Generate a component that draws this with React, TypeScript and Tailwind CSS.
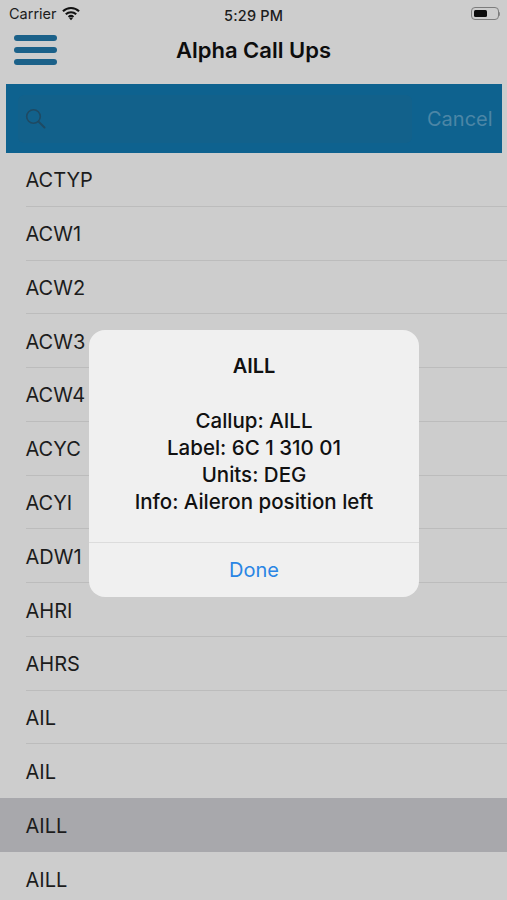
const rows = ["ACTYP","ACW1","ACW2","ACW3","ACW4","ACYC","ACYI","ADW1","AHRI","AHRS","AIL","AIL","AILL","AILL"];

export default function App() {
  return (
    <div className="relative w-[507px] h-[900px] overflow-hidden bg-[#cdcdcd] text-[#111] font-['Inter','Liberation_Sans',sans-serif]">
      {/* status bar */}
      <div className="h-[27px] flex items-center pl-[9px] pr-[7px] relative text-[14.5px] text-[#1c1c1c]">
        <span>Carrier</span>
        <svg className="ml-[5px] mb-[1px]" width="18" height="15" viewBox="0 0 19 15" fill="none" stroke="#111" strokeWidth="2.2">
          <path d="M1 5.2C5.8 .6 13.2 .6 18 5.2" />
          <path d="M4 8.4C7.1 5.5 11.9 5.5 15 8.4" />
          <path d="M6.9 11.2C8.4 9.9 10.6 9.9 12.1 11.2" />
          <path d="M9.5 14.6L7.6 12.5C8.7 11.6 10.3 11.6 11.4 12.5Z" fill="#111" stroke="none" />
        </svg>
        <span className="absolute left-[224px] top-[5px] font-medium tracking-[0.2px]">5:29 PM</span>
        <div className="ml-auto flex items-center">
          <div className="w-[28px] h-[13px] rounded-[4px] border border-[#7d7d7d] p-[2px]">
            <div className="w-[13px] h-full rounded-[1.5px] bg-[#0c0c0c]" />
          </div>
          <div className="w-[1.5px] h-[4px] bg-[#8a8a8a] rounded-r-sm" />
        </div>
      </div>
      {/* nav */}
      <div className="h-[57px] relative flex items-center justify-center">
        <div className="absolute left-[13.5px] top-[7.5px] w-[43px] flex flex-col gap-[6.3px]">
          <div className="h-[6px] rounded-full bg-[#1b6189]" />
          <div className="h-[6px] rounded-full bg-[#1b6189]" />
          <div className="h-[6px] rounded-full bg-[#1b6189]" />
        </div>
        <h1 className="text-[22px] font-semibold text-[#0d0d0d] mb-[11px]">Alpha Call Ups</h1>
      </div>
      {/* search */}
      <div className="ml-[6px] mr-[5px] h-[69px] bg-[#0e628f] flex items-center pl-[12px]">
        <div className="w-[394px] h-[48px] rounded-md bg-[#12618b] flex items-center pl-[7px]">
          <svg width="21" height="21" viewBox="0 0 21 21" fill="none" stroke="#1f4a63" strokeWidth="1.6" strokeLinecap="round">
            <circle cx="8.5" cy="8.5" r="6.8" />
            <path d="M13.6 13.6 L19.5 19.5" strokeWidth="2" />
          </svg>
        </div>
        <span className="ml-[15px] text-[20px] text-[#4c86a6]">Cancel</span>
      </div>
      {/* list */}
      <div>
        {rows.map((r, i) => (
          <div key={i} className={`h-[53.77px] pl-[25.5px] text-[20px] text-[#1c1c1c] ${i === 12 ? "bg-[#a8a8ac]" : ""}`}>
            <div className={`h-full pt-[2px] flex items-center ${i < 11 ? "border-b border-[#bcbcbc]" : ""}`}>{r}</div>
          </div>
        ))}
      </div>
      {/* alert */}
      <div className="absolute left-[89px] top-[330px] w-[330px] h-[267px] rounded-[16px] bg-[#f0f0f0] flex flex-col text-center text-[#111]">
        <div className="h-[213px] pt-[23px] border-b border-[#dcdcdc] text-[20.5px] leading-[27px]">
          <div className="font-semibold text-[20px]">AILL</div>
          <div className="mt-[27px] font-[450]">Callup: AILL</div>
          <div className="font-[450]">Label: 6C 1 310 01</div>
          <div className="font-[450]">Units: DEG</div>
          <div className="font-[450]">Info: Aileron position left</div>
        </div>
        <div className="flex-1 flex items-center justify-center text-[20px] text-[#2a85e4]">Done</div>
      </div>
    </div>
  );
}
